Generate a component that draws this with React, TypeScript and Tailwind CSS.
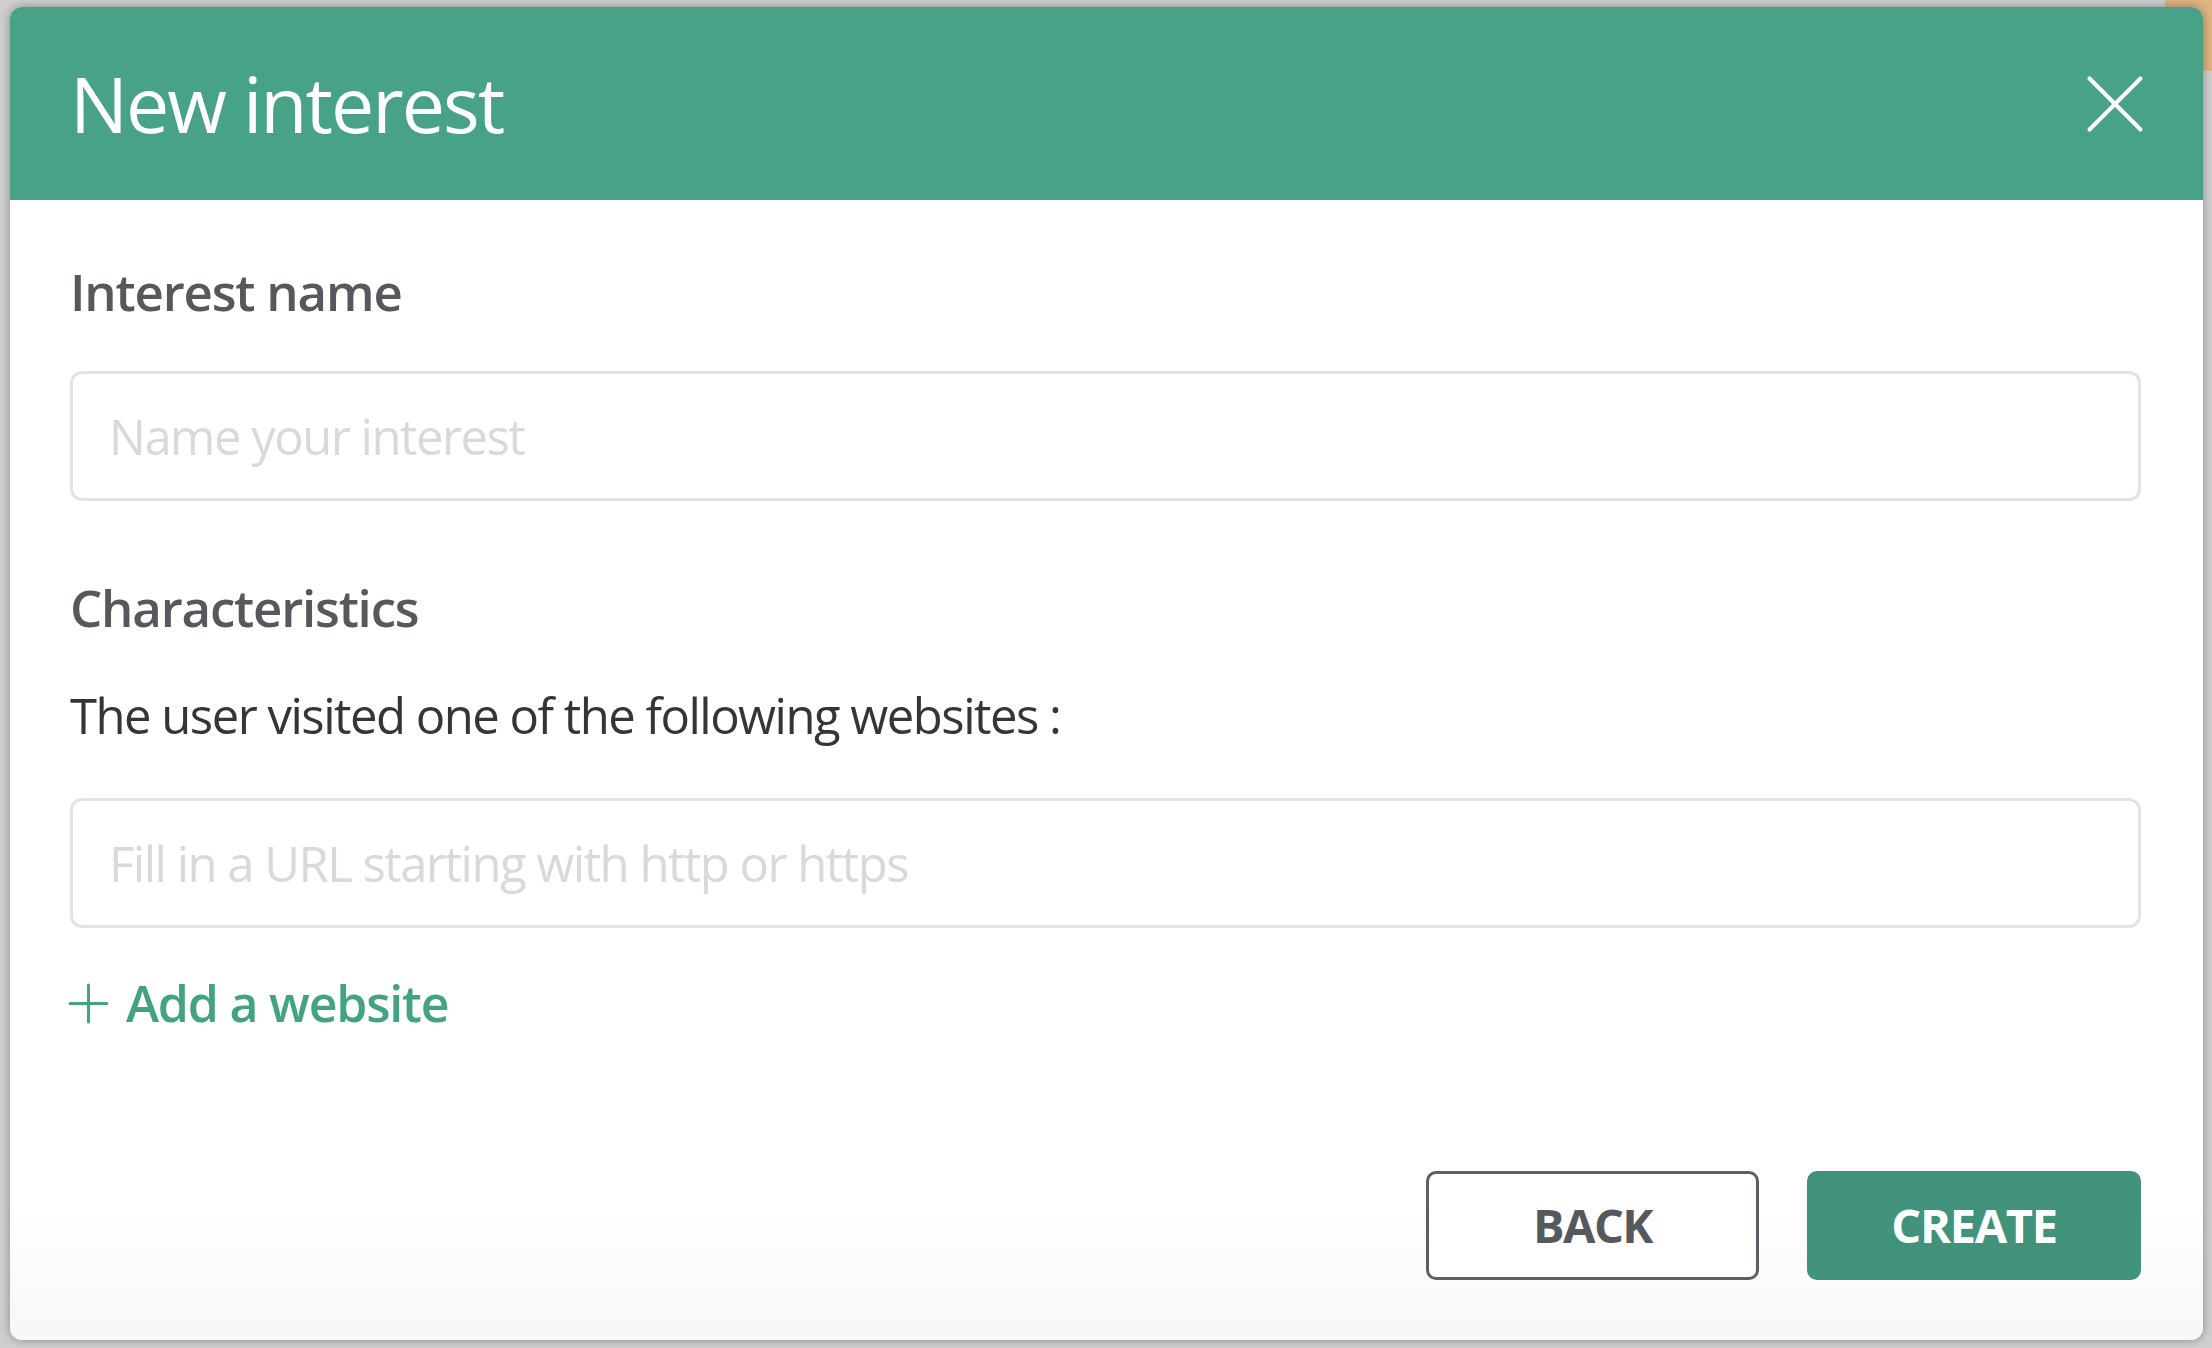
import { X, Plus } from "lucide-react";

const font = { fontFamily: "'Open Sans', 'Noto Sans', sans-serif" };

const App = () => {
  return (
    <div className="relative h-screen w-full overflow-hidden bg-[#cfcfcf]" style={font}>
      {/* page behind the dialog */}
      <div className="absolute right-0 top-0 h-[71px] w-[47px] bg-[#e0b383]" />

      <div className="relative flex h-full w-full pb-[8px] pl-[10px] pr-[9px] pt-[7px]">
        <div className="flex h-full w-full flex-col overflow-hidden rounded-[12px] bg-gradient-to-b from-white from-90% to-[#f7f7f7] shadow-[0_0_10px_rgba(0,0,0,0.35)]">
          <header className="flex h-[193px] shrink-0 items-center justify-between bg-[#48a287] pl-[60px] pr-[62px]">
            <h1 className="text-[77px] font-normal leading-none tracking-[-2px] text-white">New interest</h1>
            <button className="text-white">
              <X size={102} strokeWidth={0.95} className="-mr-[25px]" />
            </button>
          </header>

          <div className="flex flex-1 flex-col pl-[60px] pr-[62px]">
            <label className="mt-[61px] block text-[51px] font-semibold leading-[60px] tracking-[-1.2px] text-[#55595d]">Interest name</label>
            <input
              className="mt-[50px] h-[130px] w-full rounded-[12px] border-[3px] border-[#e3e3e3] px-[36px] text-[49px] tracking-[-1.5px] text-[#333] outline-none placeholder:text-[#d9d9d9]"
              placeholder="Name your interest"
            />

            <h2 className="mt-[76px] text-[51px] font-semibold leading-[60px] tracking-[-1.2px] text-[#55595d]">Characteristics</h2>
            <p className="mt-[48px] text-[49px] leading-[60px] tracking-[-1.5px] text-[#333639]">The user visited one of the following websites :</p>
            <input
              className="mt-[53px] h-[130px] w-full rounded-[12px] border-[3px] border-[#e3e3e3] px-[36px] text-[49px] tracking-[-1.5px] text-[#333] outline-none placeholder:text-[#d9d9d9]"
              placeholder="Fill in a URL starting with http or https"
            />

            <button className="mt-[45px] flex h-[60px] items-center gap-[6px] self-start text-[50px] font-semibold tracking-[-1.2px] text-[#43a283]">
              <Plus size={63} strokeWidth={1.15} className="-ml-[13px]" />
              <span>Add a website</span>
            </button>

            <div className="mt-auto flex justify-end gap-[48px] pb-[60px]">
              <button className="flex h-[109px] w-[333px] items-center justify-center rounded-[10px] border-[3px] border-[#5c6064] bg-white text-[47px] font-bold tracking-[-1.5px] text-[#55595d]">
                BACK
              </button>
              <button className="flex h-[109px] w-[334px] items-center justify-center rounded-[10px] bg-[#40927a] text-[47px] font-bold tracking-[-1.3px] text-white">
                CREATE
              </button>
            </div>
          </div>
        </div>
      </div>
    </div>
  );
};

export default App;
